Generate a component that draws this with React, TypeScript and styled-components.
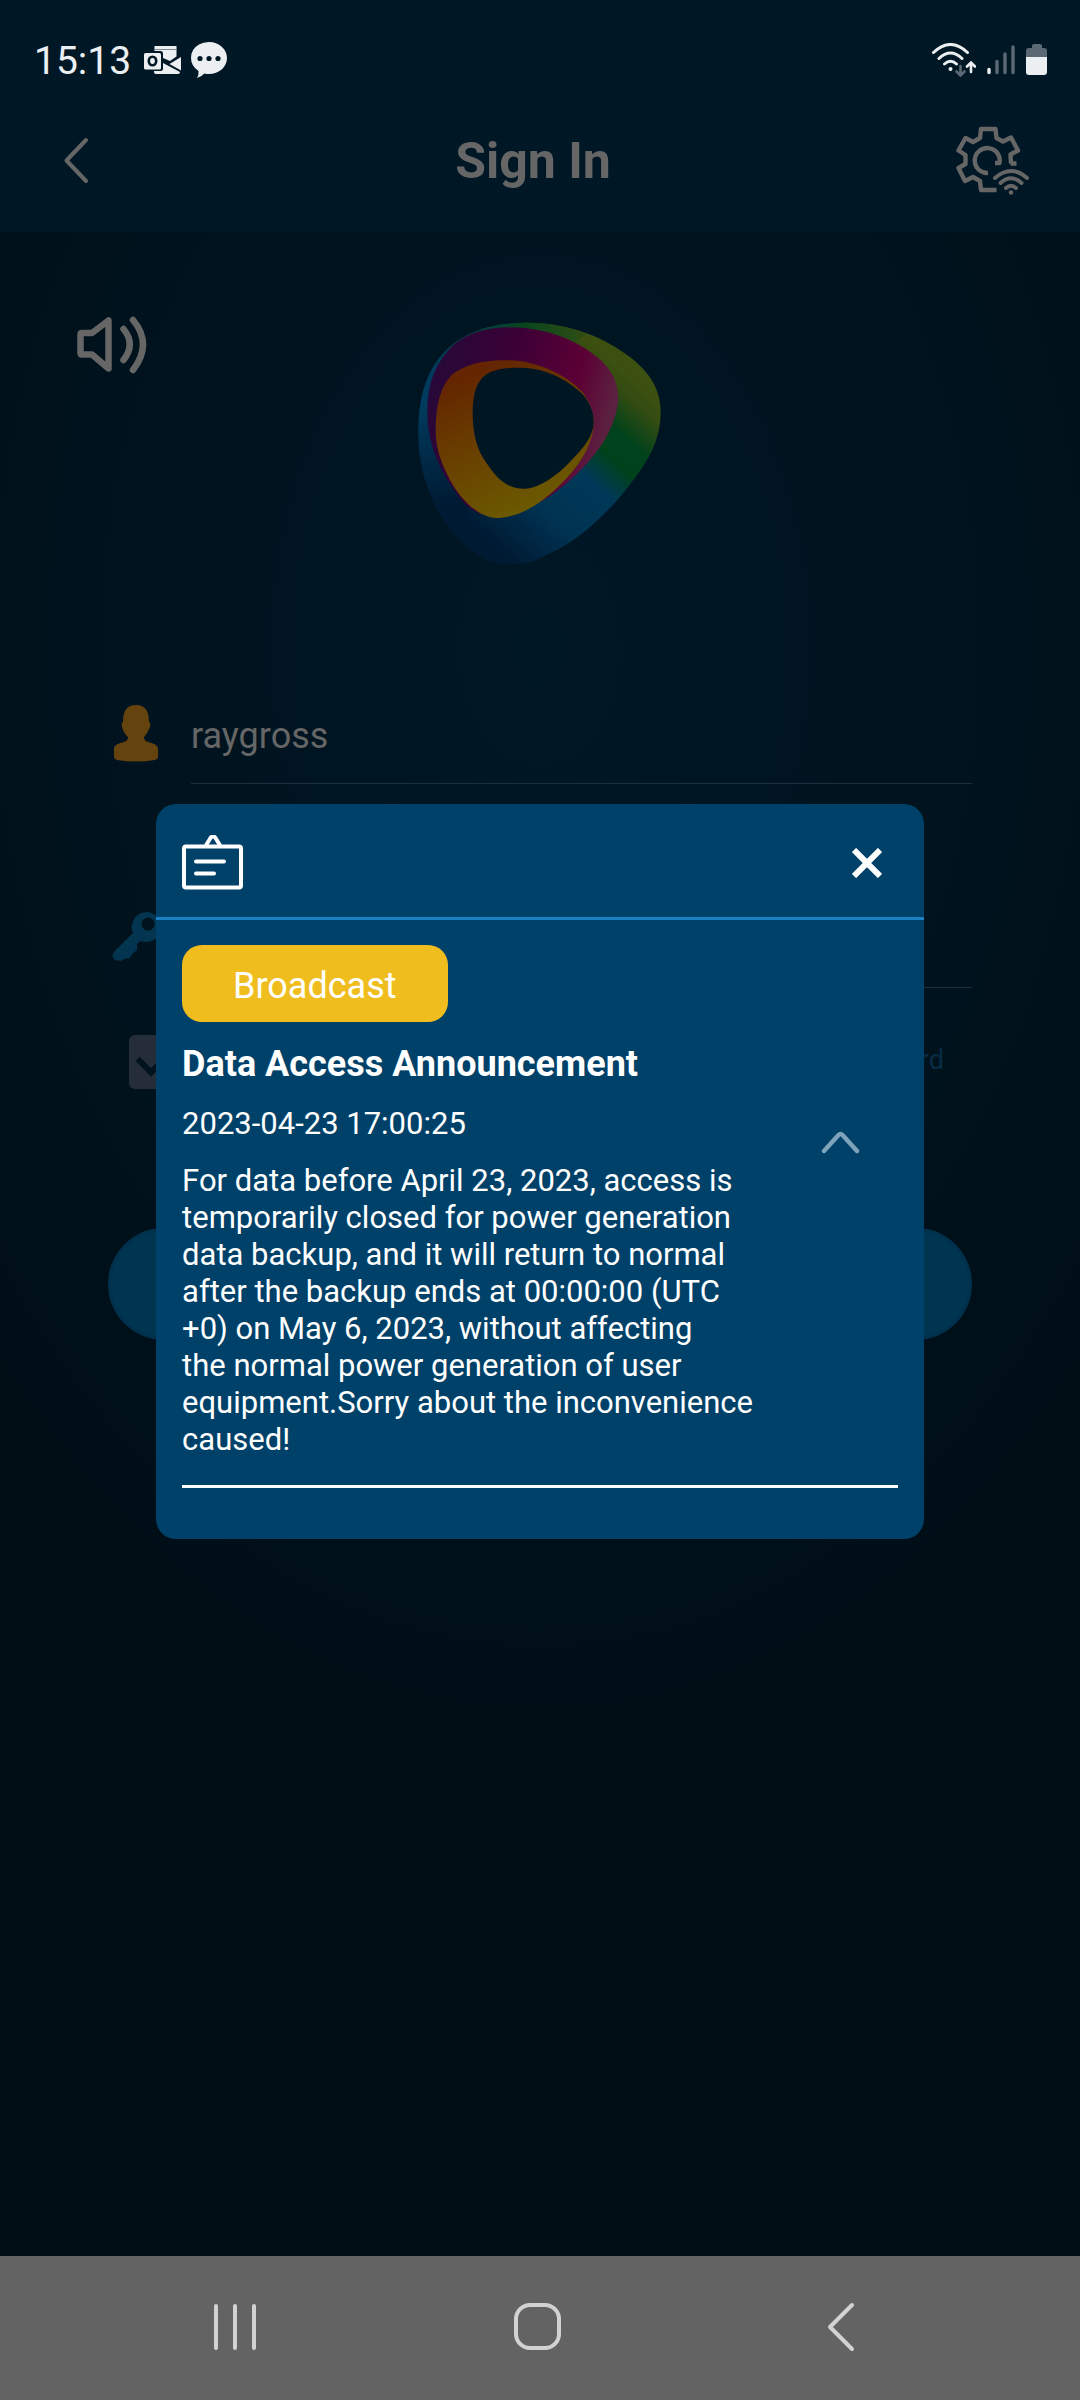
import React from "react";
import styled, { createGlobalStyle } from "styled-components";

const GlobalStyle = createGlobalStyle`
  *, *::before, *::after { box-sizing: border-box; }
  body { margin: 0; background: #000e16; font-family: Roboto, "Noto Sans", sans-serif; }
  button, input { font: inherit; color: inherit; }
  h1, h2, p { margin: 0; }
`;

const Screen = styled.div`
  display: flex;
  flex-direction: column;
  min-height: 100vh;
  background: radial-gradient(ellipse 70% 46% at 50% 27%, #001726 0%, #00131e 55%, #000e16 100%);
`;

const TopArea = styled.div`
  background: #001825;
`;

const StatusBar = styled.div`
  display: flex;
  align-items: center;
  justify-content: space-between;
  height: 88px;
  padding: 32px 32px 0 34px;
  color: #eceff2;
`;

const StatusGroup = styled.div<{ $gap: number }>`
  display: flex;
  align-items: center;
  gap: ${(p) => p.$gap}px;
`;

const Clock = styled.time`
  padding: 2px 3px 0 0;
  font-size: 39px;
  line-height: 48px;
`;

const Header = styled.header`
  display: grid;
  grid-template-columns: 80px 1fr 92px;
  align-items: center;
  height: 144px;
  padding: 2px 50px 0 48px;
  color: #666;
`;

const Title = styled.h1`
  font-size: 50px;
  line-height: 60px;
  font-weight: 700;
  text-align: center;
`;

const IconButton = styled.button<{ $align?: string }>`
  display: flex;
  align-items: center;
  justify-content: ${(p) => p.$align ?? "center"};
  padding: 0;
  border: 0;
  background: none;
  color: inherit;
  cursor: pointer;
`;

const Content = styled.main`
  flex: 1;
  display: flex;
  flex-direction: column;
`;

const Brand = styled.div`
  display: grid;
  grid-template-columns: 1fr 244px 1fr;
  align-items: start;
  padding: 84px 76px 0;
  color: #666;
`;

const LogoSlot = styled.div`
  display: flex;
  padding-top: 6px;
`;

const Form = styled.form`
  display: flex;
  flex-direction: column;
  padding: 102px 108px 0;
`;

const Field = styled.div`
  display: grid;
  grid-template-columns: 83px 1fr;
  align-items: center;
  height: 116px;
`;

const FieldIcon = styled.label`
  display: flex;
  padding: 14px 0 0 4px;
`;

const FieldInput = styled.input`
  width: 100%;
  height: 100%;
  padding: 22px 0 2px;
  border: 0;
  border-bottom: 1px solid #1c2f40;
  outline: 0;
  background: none;
  color: #666;
  font-size: 36px;
`;

const FieldGap = styled.div`
  height: 88px;
`;

const Options = styled.div`
  display: flex;
  align-items: center;
  justify-content: space-between;
  height: 148px;
  padding: 0 28px 0 21px;
`;

const CheckBox = styled.input`
  appearance: none;
  width: 54px;
  height: 54px;
  margin: 0;
  border-radius: 6px;
  background: #252e38;
  display: grid;
  place-items: center;
  &::after {
    content: "";
    width: 36px;
    height: 22px;
    border-left: 6px solid #00131e;
    border-bottom: 6px solid #00131e;
    rotate: -45deg;
    translate: 0 -6px;
  }
`;

const ForgotLink = styled.a`
  padding-bottom: 4px;
  color: #072c44;
  font-size: 27px;
  line-height: 32px;
  text-decoration: none;
`;

const SignInButton = styled.button`
  height: 112px;
  margin-top: 92px;
  border: 3px solid #00304c;
  border-radius: 56px;
  background: #003550;
`;

const NavBar = styled.nav`
  display: grid;
  grid-template-columns: 1fr 1fr 1fr;
  height: 144px;
  padding: 0 88px 2px 84px;
  background: #636363;
  color: #d2d2d2;
`;

const Overlay = styled.div`
  position: fixed;
  inset: 87px 0 144px;
  display: flex;
  align-items: center;
  justify-content: center;
`;

const Dialog = styled.section`
  width: 71.1%;
  overflow: hidden;
  border-radius: 20px;
  background: #004169;
  color: #fff;
`;

const DialogHeader = styled.div`
  display: flex;
  align-items: center;
  justify-content: space-between;
  height: 116px;
  padding: 4px 42px 0 26px;
  border-bottom: 3px solid #1c80c2;
`;

const DialogBody = styled.div`
  padding: 25px 26px 51px;
`;

const Tag = styled.button`
  display: block;
  height: 77px;
  padding: 4px 51px 0;
  border: 0;
  border-radius: 20px;
  background: #f0bd1e;
  color: #fff;
  font-size: 36px;
`;

const Notice = styled.article`
  display: grid;
  grid-template-columns: 1fr 116px;
  padding: 20px 0 27px;
  border-bottom: 3px solid #fff;
`;

const NoticeTitle = styled.h2`
  font-size: 36px;
  line-height: 44px;
  font-weight: 700;
`;

const NoticeDate = styled.time`
  display: block;
  padding: 19px 0 20px;
  font-size: 31px;
  line-height: 37px;
`;

const NoticeText = styled.p`
  max-width: 576px;
  font-size: 31px;
  line-height: 37px;
`;

const Toggle = styled(IconButton)`
  align-self: start;
  height: 44px;
  margin-top: 78px;
  color: #7fa3bb;
`;

const OutlookIcon = () => (
  <svg width="37" height="30" viewBox="0 0 37 30" aria-hidden="true">
    <path d="M10.500 1h22v10.500L26 16l-7-3V8.500q0-2.500-2.500-2.500h-6z" fill="currentColor" />
    <path d="M11 4.500h22" stroke="#7f8b93" strokeWidth="1" />
    <path d="M37 12v13.500L25.500 19z" fill="currentColor" />
    <path d="M10 26h6.500q2.500 0 2.500-2.500V18l17 9q0 2-2 2H12q-2 0-2-2z" fill="currentColor" />
    <rect x="0" y="8" width="17" height="16.500" rx="1.500" fill="currentColor" />
    <ellipse cx="8.500" cy="16" rx="3.700" ry="4.300" fill="none" stroke="#001825" strokeWidth="2.600" />
  </svg>
);

const BubbleIcon = () => (
  <svg width="36" height="36" viewBox="0 0 36 36" aria-hidden="true">
    <path d="M18 0C28 0 36 7 36 16S28 32 18 32q-2.500 0-4.500-.5Q10 35 6 36q2-3 1.500-7Q0 24 0 16 0 7 8 2.500 12 0 18 0z" fill="currentColor" />
    <g fill="#001825"><circle cx="9" cy="16.500" r="2.600" /><circle cx="18" cy="16.500" r="2.600" /><circle cx="27" cy="16.500" r="2.600" /></g>
  </svg>
);

const WifiIcon = () => (
  <svg width="44" height="34" viewBox="0 0 44 34" aria-hidden="true" fill="none" stroke="currentColor" strokeWidth="3" strokeLinecap="round">
    <path d="M1.500 9.500Q18.500-6.500 35.500 9.500M7 15.500Q18.500 4.500 30 15.500M12.500 21Q18.500 15.500 24.500 21" />
    <circle cx="18.500" cy="26" r="2" fill="currentColor" stroke="none" />
    <path d="M28.500 23v9M24.500 28.500l4 4 4-4" stroke="#5a6973" strokeWidth="2.600" />
    <path d="M39 29V19.500M35 23.500l4-4 4 4" strokeWidth="2.600" />
  </svg>
);

const SignalIcon = () => (
  <svg width="28" height="30" viewBox="0 0 28 30" aria-hidden="true" stroke="#5a6973" strokeWidth="3.400" strokeLinecap="round">
    <path d="M2 24.500v3" stroke="currentColor" />
    <path d="M10 16.500v11M18 9v18.500M26 2v25.500" />
  </svg>
);

const BatteryIcon = () => (
  <svg width="22" height="32" viewBox="0 0 22 32" aria-hidden="true">
    <path d="M6 2q0-2 2-2h6q2 0 2 2v2h2q3 0 3 3v6H0V7q0-3 3-3h3z" fill="#5a6973" />
    <path d="M0 13h21v15q0 3-3 3H3q-3 0-3-3z" fill="currentColor" />
  </svg>
);

const BackIcon = () => (
  <svg width="60" height="48" viewBox="0 0 60 48" aria-hidden="true" fill="none" stroke="currentColor" strokeWidth="4" strokeLinecap="round" strokeLinejoin="round">
    <path d="M38 3L18.500 23.500 38 44" />
  </svg>
);

const GearWifiIcon = () => (
  <svg width="76" height="70" viewBox="0 0 76 70" aria-hidden="true" fill="none" stroke="currentColor" strokeWidth="4.400" strokeLinejoin="round">
    <path d="M57 37.500L56.500 28.500 64 24.500 57 11.500 49 15.500 42.500 12 41.500 3H27l-1 9-7 4-7.500-4L4.500 24.500 11.500 29v9L4.500 42l6.500 13 8-4 7 4 1 9h15.500" />
    <path d="M62.500 37.500h-6M34 47A12.500 12.500 0 1 1 45.500 37H41" />
    <path d="M41 52Q57 38 73 52M46.500 57Q57 47.500 67.500 57M52 62Q57 57.500 62 62" strokeWidth="4" strokeLinecap="round" />
    <circle cx="57" cy="66.500" r="2.200" fill="currentColor" stroke="none" />
  </svg>
);

const SpeakerIcon = () => (
  <svg width="72" height="58" viewBox="0 0 72 58" aria-hidden="true" fill="none" stroke="currentColor" strokeWidth="6.500" strokeLinecap="round" strokeLinejoin="round">
    <path d="M4.500 18.500q0-1.500 1.500-1.500h10L32.500 4.500v48L16 38.500H6q-1.500 0-1.500-1.500z" />
    <path d="M47.500 13Q60 28 47.500 44M57 4q20 24 0 50" />
  </svg>
);

/* Coordinates are in a 900-unit square; the ring spans 85–815 by 97–823. */
const Logo = () => (
  <svg width="244" height="244" viewBox="84 96 732 732" role="img" aria-label="Logo">
    <defs>
      <linearGradient id="outer" gradientUnits="userSpaceOnUse" x1="300" y1="760" x2="740" y2="270">
        <stop offset="0" stopColor="#001a33" />
        <stop offset=".28" stopColor="#003352" />
        <stop offset=".52" stopColor="#003858" />
        <stop offset=".66" stopColor="#00421b" />
        <stop offset=".77" stopColor="#00421b" />
        <stop offset=".92" stopColor="#344c12" />
        <stop offset="1" stopColor="#3c5010" />
      </linearGradient>
      <linearGradient id="rim" gradientUnits="userSpaceOnUse" x1="120" y1="300" x2="560" y2="120">
        <stop offset="0" stopColor="#003a5c" />
        <stop offset=".5" stopColor="#063f3d" />
        <stop offset=".7" stopColor="#07451e" />
        <stop offset="1" stopColor="#2c4c14" />
      </linearGradient>
      <linearGradient id="side" gradientUnits="userSpaceOnUse" x1="100" y1="350" x2="200" y2="640">
        <stop offset="0" stopColor="#003a5c" />
        <stop offset="1" stopColor="#001a33" />
      </linearGradient>
      <linearGradient id="mid" gradientUnits="userSpaceOnUse" x1="140" y1="270" x2="650" y2="400">
        <stop offset="0" stopColor="#280838" />
        <stop offset=".4" stopColor="#3c0036" />
        <stop offset=".78" stopColor="#5c0035" />
        <stop offset="1" stopColor="#5c2040" />
      </linearGradient>
      <linearGradient id="inner" gradientUnits="userSpaceOnUse" x1="210" y1="260" x2="400" y2="660">
        <stop offset="0" stopColor="#642500" />
        <stop offset=".5" stopColor="#694000" />
        <stop offset="1" stopColor="#6b5900" />
      </linearGradient>
    </defs>
    <path d="M85 430C85 330 105 265 140 215 195 135 290 98 410 98 540 98 650 145 725 205 790 258 813 310 812 370 810 460 770 520 715 590 640 685 560 750 500 780 460 800 420 822 385 822H330C270 812 190 745 145 665 105 590 85 510 85 430z" fill="url(#outer)" />
    <path d="M140 215C195 135 290 98 410 98 480 98 540 112 590 132L450 230 190 280z" fill="url(#rim)" />
    <path d="M85 430C85 330 105 265 140 215L210 300 230 640 250 780C210 750 170 710 145 665 105 590 85 510 85 430z" fill="url(#side)" />
    <path d="M112 370C112 280 135 220 190 165 250 115 330 105 410 115 500 125 570 160 620 200 665 235 685 280 685 325 680 400 640 465 600 510 540 580 460 640 390 665 310 695 245 680 200 610 150 545 112 460 112 370z" fill="url(#mid)" />
    <path d="M137 420C137 340 155 285 185 255 230 218 300 205 390 213 470 225 540 265 580 310 605 345 611 370 611 400 609 430 605 445 590 480 560 540 500 600 445 640 400 670 355 684 320 684 260 682 205 620 175 560 150 510 137 470 137 420z" fill="url(#inner)" />
    <path d="M248 370C248 310 260 280 280 260 310 235 350 232 410 234 480 240 540 275 580 315 605 345 611 370 611 400 609 440 580 475 545 510 510 550 450 595 405 596 350 597 320 565 290 520 260 480 248 430 248 370z" fill="#001623" />
  </svg>
);

const UserIcon = () => (
  <svg width="48" height="58" viewBox="0 0 48 58" aria-hidden="true">
    <path d="M24 1C34 1 37 8 37 18q2 1 1 5-3 7-6 10 0 4 4 5 11 2 10 8v7q0 2-3 3-19 3-38 0-3-1-3-3v-7q-1-6 10-8 4-1 4-5-4-3-6-10-1-4 1-5C11 8 14 1 24 1z" fill="#65430f" />
  </svg>
);

const KeyIcon = () => (
  <svg width="52" height="52" viewBox="0 0 52 52" aria-hidden="true">
    <path fillRule="evenodd" fill="#033450" d="M35 1a16 15 0 1 1-7 29l-3 3v6l-5 4-2 4-6 1-3 2-6-1Q-1 46 2 41L21 22A15 15 0 0 1 35 1zM36 6.500a6.500 6.500 0 1 0 .1 0z" />
  </svg>
);

const BoardIcon = () => (
  <svg width="62" height="56" viewBox="0 0 62 56" aria-hidden="true" fill="none" stroke="currentColor" strokeWidth="4" strokeLinecap="round" strokeLinejoin="round">
    <rect x="2" y="11.500" width="57" height="41" rx="2" />
    <path d="M24.500 9.500L28.500 3q2.500-3.500 5 0L37.500 9.500" />
    <path d="M14 26.500h28M14 38.500h18" />
  </svg>
);

const CloseIcon = () => (
  <svg width="30" height="30" viewBox="0 0 30 30" aria-hidden="true" fill="none" stroke="currentColor" strokeWidth="6">
    <path d="M2 2l26 26M28 2L2 28" />
  </svg>
);

const ChevronUp = () => (
  <svg width="40" height="24" viewBox="0 0 40 24" aria-hidden="true" fill="none" stroke="currentColor" strokeWidth="4.400" strokeLinecap="round" strokeLinejoin="round">
    <path d="M4 21L18.500 5Q20.500 3 22.500 5L37 21" />
  </svg>
);

export default function App() {
  return (
    <Screen>
      <GlobalStyle />
      <TopArea>
        <StatusBar>
          <StatusGroup $gap={10}>
            <Clock>15:13</Clock>
            <OutlookIcon />
            <BubbleIcon />
          </StatusGroup>
          <StatusGroup $gap={11}>
            <WifiIcon />
            <SignalIcon />
            <BatteryIcon />
          </StatusGroup>
        </StatusBar>
        <Header>
          <IconButton type="button" aria-label="Back" $align="flex-start"><BackIcon /></IconButton>
          <Title>Sign In</Title>
          <IconButton type="button" aria-label="Network settings" $align="flex-end"><GearWifiIcon /></IconButton>
        </Header>
      </TopArea>

      <Content>
        <Brand>
          <IconButton type="button" aria-label="Sound" $align="flex-start"><SpeakerIcon /></IconButton>
          <LogoSlot><Logo /></LogoSlot>
        </Brand>
        <Form onSubmit={(e) => e.preventDefault()}>
          <Field>
            <FieldIcon htmlFor="user" aria-label="User name"><UserIcon /></FieldIcon>
            <FieldInput id="user" type="text" defaultValue="raygross" />
          </Field>
          <FieldGap />
          <Field>
            <FieldIcon htmlFor="password" aria-label="Password"><KeyIcon /></FieldIcon>
            <FieldInput id="password" type="password" />
          </Field>
          <Options>
            <CheckBox type="checkbox" defaultChecked aria-label="Remember" />
            <ForgotLink href="#forgot">Forgot Password</ForgotLink>
          </Options>
          <SignInButton type="submit" aria-label="Sign In" />
        </Form>
      </Content>

      <NavBar aria-label="System">
        <IconButton type="button" aria-label="Recent apps">
          <svg width="46" height="50" viewBox="0 0 46 50" fill="none" stroke="currentColor" strokeWidth="4" strokeLinecap="round"><path d="M4 4v42M23 4v42M42 4v42" /></svg>
        </IconButton>
        <IconButton type="button" aria-label="Home">
          <svg width="50" height="50" viewBox="0 0 50 50" fill="none" stroke="currentColor" strokeWidth="4"><rect x="3" y="3" width="43" height="43" rx="14" /></svg>
        </IconButton>
        <IconButton type="button" aria-label="Go back">
          <svg width="30" height="50" viewBox="0 0 30 50" fill="none" stroke="currentColor" strokeWidth="4" strokeLinecap="round" strokeLinejoin="round"><path d="M26 3L4 25l22 22" /></svg>
        </IconButton>
      </NavBar>

      <Overlay>
        <Dialog role="dialog" aria-modal="true" aria-labelledby="notice-title">
          <DialogHeader>
            <BoardIcon />
            <IconButton type="button" aria-label="Close"><CloseIcon /></IconButton>
          </DialogHeader>
          <DialogBody>
            <Tag type="button">Broadcast</Tag>
            <Notice>
              <div>
                <NoticeTitle id="notice-title">Data Access Announcement</NoticeTitle>
                <NoticeDate dateTime="2023-04-23T17:00:25">2023-04-23 17:00:25</NoticeDate>
                <NoticeText>
                  For data before April 23, 2023, access is temporarily closed for power generation data backup, and it
                  will return to normal after the backup ends at 00:00:00 (UTC +0) on May 6, 2023, without affecting
                  the&nbsp;normal power generation of user equipment.Sorry about the inconvenience caused!
                </NoticeText>
              </div>
              <Toggle type="button" aria-label="Collapse"><ChevronUp /></Toggle>
            </Notice>
          </DialogBody>
        </Dialog>
      </Overlay>
    </Screen>
  );
}
